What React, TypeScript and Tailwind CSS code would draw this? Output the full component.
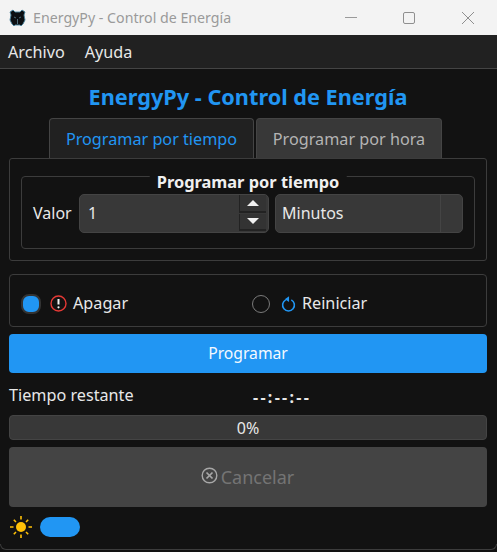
import React from 'react';

const FONT = "font-['Noto_Sans','Open_Sans',sans-serif]";

const TitleBar: React.FC = () => (
  <div className="h-[35px] bg-[#f3f3f3] flex items-center shrink-0">
    <svg className="ml-[9px] w-[17px] h-[18px]" viewBox="0 0 17 18">
      <path d="M1 3l3-2 2 2h5l2-2 3 2-1 3 1 5-2 4-2 2-1-1H6l-1 1-2-2-2-4 1-5z" fill="#0c0f12" stroke="#4a86a0" strokeWidth="0.9" />
      <path d="M5 8l2 1M12 8l-2 1M8.5 10v5" stroke="#5f8494" strokeWidth="0.8" />
    </svg>
    <span className="ml-[7px] text-[14.2px] text-[#9a9a9a] whitespace-nowrap">EnergyPy - Control de Energía</span>
    <div className="ml-auto flex items-center">
      <div className="w-[12px] h-px bg-[#9a9a9a] mr-[46px]"></div>
      <div className="w-[12px] h-[12px] border border-[#8f8f8f] rounded-[2px] mr-[47px]"></div>
      <svg className="w-[12px] h-[12px] mr-[23px]" viewBox="0 0 12 12">
        <path d="M0 0l12 12M12 0L0 12" stroke="#8f8f8f" strokeWidth="1" fill="none" />
      </svg>
    </div>
  </div>
);

const MenuBar: React.FC = () => (
  <div className="h-[34px] pt-[1px] bg-[#212121] border-b border-[#444444] flex items-center pl-[8px] gap-[20px] text-[16.2px] text-[#e8e8e8] shrink-0">
    <span>Archivo</span>
    <span>Ayuda</span>
  </div>
);

const Tabs: React.FC = () => (
  <div className="flex pl-[49px] gap-[2px] h-[40px] relative z-10">
    <div className="w-[205px] pt-[1px] bg-[#212121] border border-b-0 border-[#444444] rounded-t-[4px] flex items-center justify-center text-[16.2px] text-[#2196f3]">
      Programar por tiempo
    </div>
    <div className="w-[186px] pt-[1px] bg-[#383838] border border-b-0 border-[#444444] rounded-t-[4px] flex items-center justify-center text-[16.2px] text-[#b4b4b4]">
      Programar por hora
    </div>
  </div>
);

const SpinButtons: React.FC = () => (
  <div className="flex flex-col w-[27px] h-[36px] mr-[2px] gap-[1px]">
    <div className="flex-1 bg-[#333333] border-b-2 border-l border-[#222222] flex items-center justify-center">
      <div className="w-0 h-0 border-l-[6px] border-r-[6px] border-b-[6px] border-l-transparent border-r-transparent border-b-[#f0f0f0]"></div>
    </div>
    <div className="flex-1 bg-[#333333] border-b-2 border-l border-[#222222] flex items-center justify-center">
      <div className="w-0 h-0 border-l-[6px] border-r-[6px] border-t-[6px] border-l-transparent border-r-transparent border-t-[#f0f0f0]"></div>
    </div>
  </div>
);

const TimePanel: React.FC = () => (
  <div className="ml-[9px] mr-[10px] h-[103px] border border-[#3c3c3c] rounded-[3px] px-[11px] pt-[17px]">
    <div className="relative h-[73px] border border-[#3c3c3c] rounded-[4px] flex items-center pl-[11px] pt-[1px]">
      <span className="absolute left-1/2 -translate-x-1/2 -top-[6px] px-[7px] leading-[22px] h-[22px] bg-[linear-gradient(#121212,#121212)] bg-[length:100%_8px] bg-no-repeat text-[16.4px] font-bold text-[#f0f0f0] whitespace-nowrap">
        Programar por tiempo
      </span>
      <span className="text-[16px] text-[#e8e8e8] w-[46px]">Valor</span>
      <div className="w-[190px] h-[39px] bg-[#383838] border border-[#444444] rounded-[5px] flex items-center justify-between pl-[8px] text-[16px] text-[#e8e8e8]">
        <span>1</span>
        <SpinButtons />
      </div>
      <div className="ml-[6px] w-[188px] h-[39px] bg-[#383838] border border-[#444444] rounded-[5px] flex items-center text-[16px] text-[#e8e8e8]">
        <span className="pl-[6px] flex-1">Minutos</span>
        <div className="w-[22px] h-full border-l border-[#444444]"></div>
      </div>
    </div>
  </div>
);

const ActionPanel: React.FC = () => (
  <div className="ml-[9px] mr-[10px] mt-[13px] h-[53px] pt-[6px] border border-[#3c3c3c] rounded-[4px] flex items-center text-[16.2px] text-[#e8e8e8]">
    <div className="ml-[11px] w-[20px] h-[20px] rounded-[8px] bg-[#2196f3] border-2 border-[#333333]"></div>
    <svg className="ml-[9px] w-[17px] h-[17px]" viewBox="0 0 17 17">
      <circle cx="8.5" cy="8.5" r="7.5" fill="none" stroke="#e53935" strokeWidth="1.4" />
      <path d="M8.5 4v5.5" stroke="#f4f4f4" strokeWidth="2" />
      <circle cx="8.5" cy="12.3" r="1.1" fill="#f4f4f4" />
    </svg>
    <span className="ml-[6px] w-[55px]">Apagar</span>
    <div className="ml-[124px] w-[18px] h-[18px] rounded-full border border-[#7a7a7a]"></div>
    <svg className="ml-[11px] w-[15px] h-[18px]" viewBox="0 0 16 18">
      <path d="M5 4.6a6.3 6.3 0 1 0 6 0" fill="none" stroke="#2196f3" strokeWidth="1.7" />
      <path d="M8.6 0.8v6L4 3.8z" fill="#2196f3" />
    </svg>
    <span className="ml-[6px]">Reiniciar</span>
  </div>
);

const Sun: React.FC = () => (
  <svg className="w-[22px] h-[22px]" viewBox="0 0 22 22">
    <circle cx="11" cy="11" r="5" fill="#ffc107" />
    <path
      d="M11 0v3.5M11 18.5V22M0 11h3.5M18.5 11H22M3.8 3.8l2.2 2.2M16 16l2.2 2.2M18.2 3.8L16 6M6 16l-2.2 2.2"
      stroke="#ffc107"
      strokeWidth="1.6"
    />
  </svg>
);

const App: React.FC = () => {
  return (
    <div className={`${FONT} w-[497px] h-[552px] overflow-hidden flex flex-col bg-[#121212] relative`}>
      <TitleBar />
      <MenuBar />
      <div className="h-[49px] pt-[12px] pr-[1px] text-center text-[21.7px] leading-[32px] font-bold text-[#2196f3] shrink-0">
        EnergyPy - Control de Energía
      </div>
      <Tabs />
      <TimePanel />
      <ActionPanel />
      <div className="ml-[9px] mr-[10px] mt-[7px] h-[39px] bg-[#2196f3] rounded-[4px] flex items-center justify-center text-[15.7px] text-[#f4f9ff]">
        Programar
      </div>
      <div className="ml-[9px] mr-[10px] mt-[12px] h-[20px] pt-[1px] flex items-center text-[16.2px] text-[#e8e8e8]">
        <span className="w-[244px]">Tiempo restante</span>
        <span className="mt-[3px] text-[16px] font-bold tracking-[2.3px]">--:--:--</span>
      </div>
      <div className="ml-[9px] mr-[10px] mt-[10px] h-[25px] bg-[#383838] border border-[#444444] rounded-[4px] flex items-center justify-center text-[16px] text-[#e8e8e8]">
        0%
      </div>
      <div className="ml-[9px] mr-[10px] mt-[7px] h-[60px] bg-[#444444] rounded-[4px] flex items-center justify-center text-[#747474]">
        <svg className="w-[17px] h-[17px] mt-[-3px]" viewBox="0 0 17 17">
          <circle cx="8.5" cy="8.5" r="7.3" fill="none" stroke="#a8a8a8" strokeWidth="1.4" />
          <path d="M5.5 5.5l6 6M11.5 5.5l-6 6" stroke="#a8a8a8" strokeWidth="1.7" />
        </svg>
        <span className="ml-[3px] mr-[1px] text-[18px]">Cancelar</span>
      </div>
      <div className="mt-[9px] ml-[10px] flex items-center gap-[8px]">
        <Sun />
        <div className="w-[40px] h-[20px] rounded-full bg-[#2196f3]"></div>
      </div>
      <div className="absolute left-0 right-0 bottom-[2px] h-[6px] border-b border-l border-r border-[#3c3c3c] rounded-b-[8px]"></div>
    </div>
  );
};

export default App;
